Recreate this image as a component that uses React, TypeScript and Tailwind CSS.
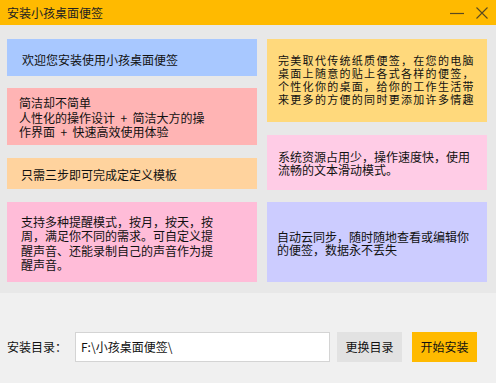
import React from "react";

const font = { fontFamily: '"Noto Sans CJK SC", "Noto Sans", sans-serif' };

export default function App() {
  return (
    <div className="w-[496px] h-[383px] flex flex-col bg-[#f0f0f0] text-[12px] text-[#111]" style={font}>
      {/* title bar */}
      <div className="h-[25px] bg-[#ffba00] flex items-center pl-[7px] pr-[8px] shrink-0">
        <div className="text-[12px] leading-none text-[#222]">安装小孩桌面便签</div>
        <div className="ml-auto flex items-center gap-[12px]">
          <svg width="14" height="14" viewBox="0 0 14 14">
            <path d="M0 7.5 H14" stroke="#5a4a20" strokeWidth="1.2" />
          </svg>
          <svg width="12" height="12" viewBox="0 0 12 12">
            <path d="M0.5 0.5 L11.5 11.5 M11.5 0.5 L0.5 11.5" stroke="#5a4a20" strokeWidth="1.1" />
          </svg>
        </div>
      </div>

      {/* content */}
      <div className="h-[268px] bg-[#e8e8e8] flex gap-[10px] pl-[7px] pt-[14px] shrink-0">
        <div className="w-[250px] flex flex-col">
          <div className="h-[37px] bg-[#a8c8ff] pl-[15px] pt-[13px] leading-[15px]">欢迎您安装使用小孩桌面便签</div>
          <div className="h-[57px] mt-[12px] bg-[#ffb4b4] pl-[12px] pt-[8px] leading-[14.5px]">
            简洁却不简单<br />人性化的操作设计 &nbsp;+&nbsp; 简洁大方的操<br />作界面 &nbsp;+&nbsp; 快速高效使用体验
          </div>
          <div className="h-[31px] mt-[13px] bg-[#ffd39e] pl-[14px] pt-[9px] leading-[15px]">只需三步即可完成定定义模板</div>
          <div className="h-[80px] mt-[13px] bg-[#ffbcd8] pl-[14px] pt-[13px] leading-[14.3px]">
            支持多种提醒模式，按月，按天，按<br />周，满足你不同的需求。可自定义提<br />醒声音、还能录制自己的声音作为提<br />醒声音。
          </div>
        </div>
        <div className="w-[220px] flex flex-col">
          <div className="h-[83px] bg-[#ffd97c] pl-[11px] pt-[15px] text-[11px] leading-[13px] tracking-[1.3px]">
            完美取代传统纸质便签，在您的电脑<br />桌面上随意的贴上各式各样的便签，<br />个性化你的桌面，给你的工作生活带<br />来更多的方便的同时更添加许多情趣
          </div>
          <div className="h-[55px] mt-[13px] bg-[#ffcce6] pl-[11px] pt-[15px] leading-[13.3px]">
            系统资源占用少，操作速度快，使用<br />流畅的文本滑动模式。
          </div>
          <div className="h-[80px] mt-[12px] bg-[#ccccff] pl-[10px] pt-[28px] leading-[13.4px]">
            自动云同步，随时随地查看或编辑你<br />的便签，数据永不丢失
          </div>
        </div>
      </div>

      {/* bottom */}
      <div className="flex-1 flex items-start pt-[39px] pl-[7px]">
        <div className="h-[30px] flex items-center w-[68px]">安装目录：</div>
        <div className="w-[255px] h-[30px] bg-white border border-[#d4d4d4] flex items-center pl-[5px]">F:\小孩桌面便签\</div>
        <div className="ml-[7px] w-[65px] h-[30px] bg-[#e2e2e2] flex items-center justify-center">更换目录</div>
        <div className="ml-[10px] w-[65px] h-[30px] bg-[#ffba00] flex items-center justify-center">开始安装</div>
      </div>
    </div>
  );
}
